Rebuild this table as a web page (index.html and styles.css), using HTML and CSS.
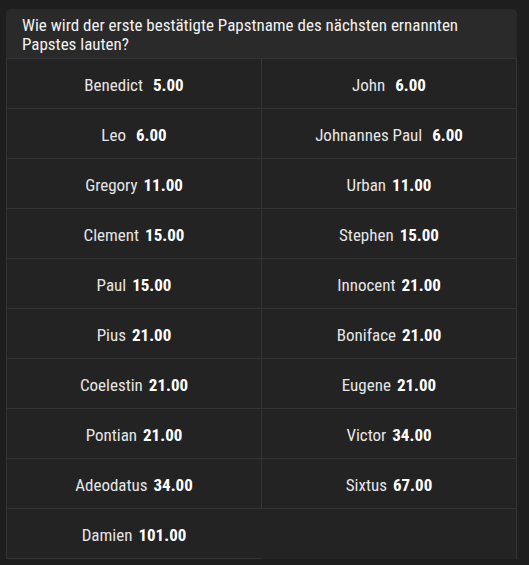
FILE: index.html
```html
<!DOCTYPE html>
<html lang="de">
<head>
<meta charset="utf-8">
<link rel="stylesheet" href="styles.css">
</head>
<body>
<section class="market">
  <header class="market-title">Wie wird der erste bestätigte Papstname des nächsten ernannten Papstes lauten?</header>
  <div class="odds-grid">
    <div class="cell"><span class="name">Benedict</span><span class="price short">5.00</span></div>
    <div class="cell"><span class="name">John</span><span class="price short">6.00</span></div>
    <div class="cell"><span class="name">Leo</span><span class="price short">6.00</span></div>
    <div class="cell"><span class="name">Johnannes Paul</span><span class="price short">6.00</span></div>
    <div class="cell"><span class="name">Gregory</span><span class="price">11.00</span></div>
    <div class="cell"><span class="name">Urban</span><span class="price">11.00</span></div>
    <div class="cell"><span class="name">Clement</span><span class="price">15.00</span></div>
    <div class="cell"><span class="name">Stephen</span><span class="price">15.00</span></div>
    <div class="cell"><span class="name">Paul</span><span class="price">15.00</span></div>
    <div class="cell"><span class="name">Innocent</span><span class="price">21.00</span></div>
    <div class="cell"><span class="name">Pius</span><span class="price">21.00</span></div>
    <div class="cell"><span class="name">Boniface</span><span class="price">21.00</span></div>
    <div class="cell"><span class="name">Coelestin</span><span class="price">21.00</span></div>
    <div class="cell"><span class="name">Eugene</span><span class="price">21.00</span></div>
    <div class="cell"><span class="name">Pontian</span><span class="price">21.00</span></div>
    <div class="cell"><span class="name">Victor</span><span class="price">34.00</span></div>
    <div class="cell"><span class="name">Adeodatus</span><span class="price">34.00</span></div>
    <div class="cell"><span class="name">Sixtus</span><span class="price">67.00</span></div>
    <div class="cell"><span class="name">Damien</span><span class="price">101.00</span></div>
  </div>
</section>
</body>
</html>
```
FILE: styles.css
```css
html, body {
  margin: 0;
  padding: 0;
  background: #1e1e1e;
  height: 100%;
}

body {
  font-family: "Roboto Condensed", "Roboto", sans-serif;
  font-stretch: condensed;
  color: #e8e8e8;
  padding-top: 9px;
  padding-left: 6px;
  box-sizing: border-box;
}

.market {
  width: 511px;
  border-radius: 5px 5px 0 0;
  overflow: hidden;
}

.market-title {
  box-sizing: border-box;
  height: 49px;
  padding: 7px 16px 0 16px;
  background: #2a2a2a;
  font-size: 17px;
  line-height: 19px;
  color: #f2f2f2;
}

.odds-grid {
  display: grid;
  grid-template-columns: 1fr 1fr;
  border-top: 1px solid #343434;
  border-right: 1px solid #343434;
  background: #232323;
}

.cell {
  height: 50px;
  box-sizing: border-box;
  padding-top: 3px;
  display: flex;
  align-items: center;
  justify-content: center;
  gap: 6px;
  border-left: 1px solid #343434;
  border-bottom: 1px solid #343434;
  font-size: 17px;
  background: #232323;
}

.name {
  color: #e6e6e6;
}

.price {
  font-weight: 700;
  color: #ffffff;
}

.price.short {
  margin-left: 4px;
}
```
